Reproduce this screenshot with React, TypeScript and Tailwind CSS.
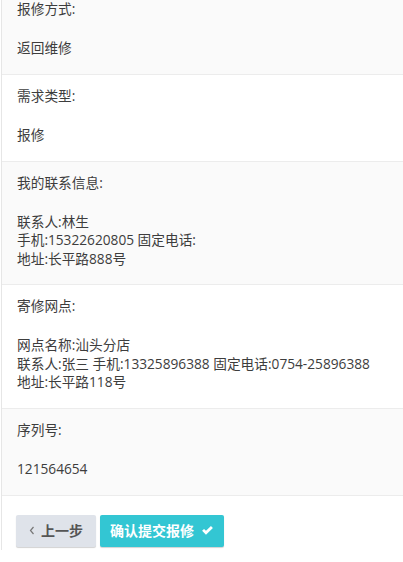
const rows = [
  { label: "报修方式:", lines: ["返回维修"], shade: true },
  { label: "需求类型:", lines: ["报修"], shade: false },
  {
    label: "我的联系信息:",
    lines: ["联系人:林生", "手机:15322620805 固定电话:", "地址:长平路888号"],
    shade: true,
  },
  {
    label: "寄修网点:",
    lines: ["网点名称:汕头分店", "联系人:张三 手机:13325896388 固定电话:0754-25896388", "地址:长平路118号"],
    shade: false,
  },
  { label: "序列号:", lines: ["121564654"], shade: true },
];

export default function App() {
  return (
    <div
      className="min-h-[562px] overflow-hidden bg-white pl-px"
      style={{ fontFamily: '"Open Sans", "Noto Sans CJK SC", sans-serif' }}
    >
      <div className="min-h-[562px] border-l border-[#e6e6e6]">
        <div className="-mt-[12px]">
          {rows.map((row, i) => (
            <div
              key={i}
              className={`border-b border-[#ececec] pl-[15px] pr-4 pt-[11px] pb-[16.25px] text-[13.7px] text-[#3d3d3d] ${
                row.shade ? "bg-[#fafafa]" : "bg-white"
              }`}
            >
              <div className="leading-5">{row.label}</div>
              <div className="mt-[20px] leading-[18.5px]">
                {row.lines.map((l, j) => (
                  <div key={j} className="whitespace-nowrap">
                    {l}
                  </div>
                ))}
              </div>
            </div>
          ))}
        </div>

        {/* Actions */}
        <div className="flex gap-1 pl-[14px] pt-[19px]">
          <button className="flex h-8 w-[80px] items-center justify-center gap-[6px] rounded-[2px] bg-[#dfe3ea] text-[14px] font-bold text-[#555] shadow-[0_1px_1px_rgba(0,0,0,0.18)]">
            <svg width="6" height="9" viewBox="0 0 6 9" fill="none">
              <path d="M4.5 1 L1.5 4.5 L4.5 8" stroke="#777" strokeWidth="1.2" />
            </svg>
            上一步
          </button>
          <button className="flex h-8 w-[124px] items-center justify-center gap-[7px] rounded-[2px] bg-[#33c6d3] text-[14px] font-bold text-white shadow-[0_1px_1px_rgba(0,0,0,0.18)]">
            确认提交报修
            <svg width="13" height="11" viewBox="0 0 12 10">
              <path d="M1 5.3 L2.8 3.5 L4.6 5.3 L9.2 0.8 L11 2.6 L4.6 9 Z" fill="white" />
            </svg>
          </button>
        </div>
      </div>
    </div>
  );
}
